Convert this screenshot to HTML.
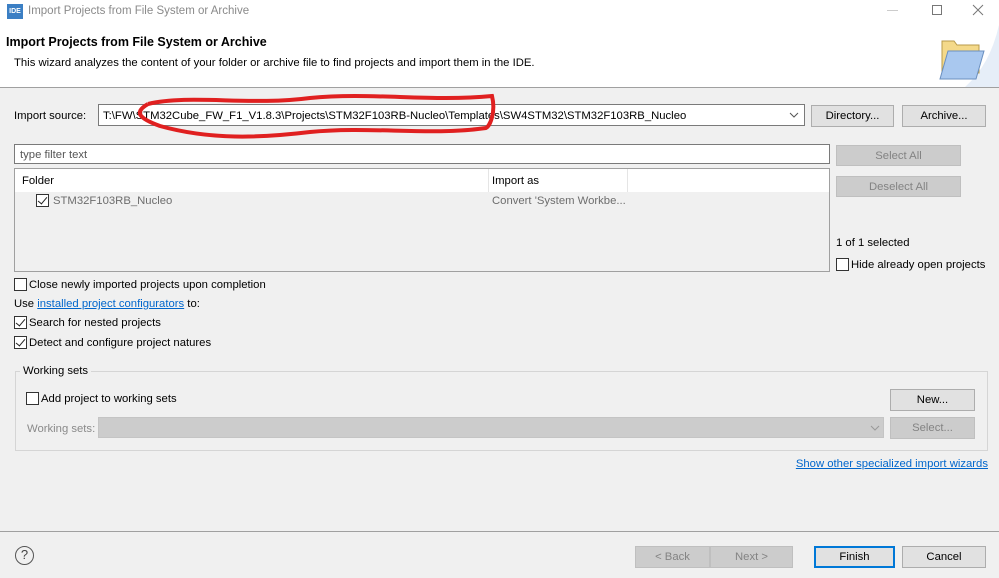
<!DOCTYPE html>
<html><head><meta charset="utf-8"><style>
*{box-sizing:border-box;margin:0;padding:0}
body{width:999px;height:578px;background:#f0f0f0;font-family:"Liberation Sans",sans-serif;font-size:11.3px;color:#000;position:relative;overflow:hidden}
.a{position:absolute;white-space:nowrap}
.t{margin-top:1px}
.btn{position:absolute;background:#e1e1e1;border:1px solid #adadad;text-align:center;font-size:11.3px}
.dis{background:#cccccc;border-color:#bfbfbf;color:#838383}
.cb{position:absolute;width:13px;height:13px;border:1px solid #333;background:#fff}
.ck::after{content:"";position:absolute;left:3px;top:0px;width:4px;height:8px;border:solid #222;border-width:0 1.5px 1.5px 0;transform:rotate(40deg)}
.lnk{color:#0066cc;text-decoration:underline}
</style></head><body>
<div class="a" style="left:0;top:0;width:999px;height:88px;background:#fff;border-bottom:1px solid #a0a0a0"></div>
<div class="a" style="left:7px;top:4px;width:16px;height:15px;background:#3b7fc4;color:#fff;font-size:7px;font-weight:bold;line-height:15px;text-align:center">IDE</div>
<div class="a" style="left:28px;top:5px;color:#8a8a8a;font-size:11.5px">Import Projects from File System or Archive</div>
<div class="a" style="left:887px;top:10px;width:11px;height:1px;background:#ccc"></div>
<div class="a" style="left:932px;top:5px;width:10px;height:10px;border:1px solid #777"></div>
<svg class="a" style="left:972px;top:4px" width="12" height="12"><path d="M1 1L11 11M11 1L1 11" stroke="#777" stroke-width="1"/></svg>
<div class="a" style="left:6px;top:35px;font-size:12.5px;font-weight:bold">Import Projects from File System or Archive</div>
<div class="a" style="left:14px;top:57px">This wizard analyzes the content of your folder or archive file to find projects and import them in the IDE.</div>
<svg class="a" style="left:930px;top:25px" width="69" height="62"><path d="M69 0 L69 62 L35 62 Q60 40 69 0Z" fill="#e6eef8"/><path d="M12 16 h12 l3 4 h22 v28 h-37z" fill="#f4d98a" stroke="#b89a4a"/><path d="M18 26 h36 l-8 28 h-36z" fill="#a9c8ef" stroke="#6a8fbf"/></svg>
<div class="a" style="left:14px;top:110px">Import source:</div>
<div class="a" style="left:98px;top:104px;width:707px;height:22px;background:#fff;border:1px solid #7a7a7a;padding:5px 4px 0">T:\FW\STM32Cube_FW_F1_V1.8.3\Projects\STM32F103RB-Nucleo\Templates\SW4STM32\STM32F103RB_Nucleo</div>
<svg class="a" style="left:789px;top:112px" width="10" height="6"><path d="M1 1L5 5L9 1" fill="none" stroke="#555"/></svg>
<div class="btn" style="left:811px;top:105px;width:83px;height:22px;line-height:21px">Directory...</div>
<div class="btn" style="left:902px;top:105px;width:84px;height:22px;line-height:21px">Archive...</div>
<svg class="a" style="left:130px;top:92px" width="370" height="52"><path d="M18 12 C60 2 120 14 180 6 C240 0 300 10 362 4 C366 20 360 34 356 36 C300 44 240 34 180 40 C130 46 80 48 30 34 C8 26 4 20 18 12" fill="none" stroke="#e02020" stroke-width="4"/></svg>
<div class="a" style="left:14px;top:144px;width:816px;height:20px;background:#fff;border:1px solid #7a7a7a;padding:4px 5px 0;color:#555">type filter text</div>
<div class="btn dis" style="left:836px;top:145px;width:125px;height:21px;line-height:20px">Select All</div>
<div class="btn dis" style="left:836px;top:176px;width:125px;height:21px;line-height:20px">Deselect All</div>
<div class="a" style="left:14px;top:168px;width:816px;height:104px;background:#f0f0f0;border:1px solid #a0a0a0"></div>
<div class="a" style="left:15px;top:169px;width:814px;height:23px;background:#fff"></div>
<div class="a" style="left:488px;top:169px;width:1px;height:23px;background:#e5e5e5"></div>
<div class="a" style="left:627px;top:169px;width:1px;height:23px;background:#e5e5e5"></div>
<div class="a" style="left:22px;top:175px">Folder</div>
<div class="a" style="left:492px;top:175px">Import as</div>
<div class="cb ck" style="left:36px;top:194px"></div>
<div class="a" style="left:53px;top:195px;color:#6d6d6d">STM32F103RB_Nucleo</div>
<div class="a" style="left:492px;top:195px;color:#6d6d6d">Convert 'System Workbe...</div>
<div class="a" style="left:836px;top:237px">1 of 1 selected</div>
<div class="cb" style="left:836px;top:258px"></div>
<div class="a" style="left:851px;top:259px">Hide already open projects</div>
<div class="cb" style="left:14px;top:278px"></div>
<div class="a" style="left:29px;top:279px">Close newly imported projects upon completion</div>
<div class="a" style="left:14px;top:298px">Use <span class="lnk">installed project configurators</span> to:</div>
<div class="cb ck" style="left:14px;top:316px"></div>
<div class="a" style="left:29px;top:317px">Search for nested projects</div>
<div class="cb ck" style="left:14px;top:336px"></div>
<div class="a" style="left:29px;top:337px">Detect and configure project natures</div>
<div class="a" style="left:15px;top:371px;width:973px;height:80px;border:1px solid #d5d5d5"></div>
<div class="a" style="left:20px;top:365px;background:#f0f0f0;padding:0 3px">Working sets</div>
<div class="cb" style="left:26px;top:392px"></div>
<div class="a" style="left:41px;top:393px">Add project to working sets</div>
<div class="btn" style="left:890px;top:389px;width:85px;height:22px;line-height:21px">New...</div>
<div class="a" style="left:27px;top:423px;color:#8a8a8a">Working sets:</div>
<div class="a" style="left:98px;top:417px;width:786px;height:21px;background:#cccccc;border:1px solid #c4c4c4"></div>
<svg class="a" style="left:870px;top:425px" width="10" height="6"><path d="M1 1L5 5L9 1" fill="none" stroke="#999"/></svg>
<div class="btn dis" style="left:890px;top:417px;width:85px;height:22px;line-height:21px">Select...</div>
<div class="a lnk" style="right:11px;top:458px">Show other specialized import wizards</div>
<div class="a" style="left:0;top:531px;width:999px;height:1px;background:#a0a0a0"></div>
<div class="a" style="left:15px;top:546px;width:19px;height:19px;border:1.5px solid #555;border-radius:50%;text-align:center;line-height:16px;font-size:13px;color:#444">?</div>
<div class="btn dis" style="left:635px;top:546px;width:75px;height:22px;line-height:21px">&lt; Back</div>
<div class="btn dis" style="left:710px;top:546px;width:83px;height:22px;line-height:21px">Next &gt;</div>
<div class="btn" style="left:814px;top:546px;width:81px;height:22px;line-height:19px;border:2px solid #0078d7">Finish</div>
<div class="btn" style="left:902px;top:546px;width:84px;height:22px;line-height:21px">Cancel</div>
</body></html>
